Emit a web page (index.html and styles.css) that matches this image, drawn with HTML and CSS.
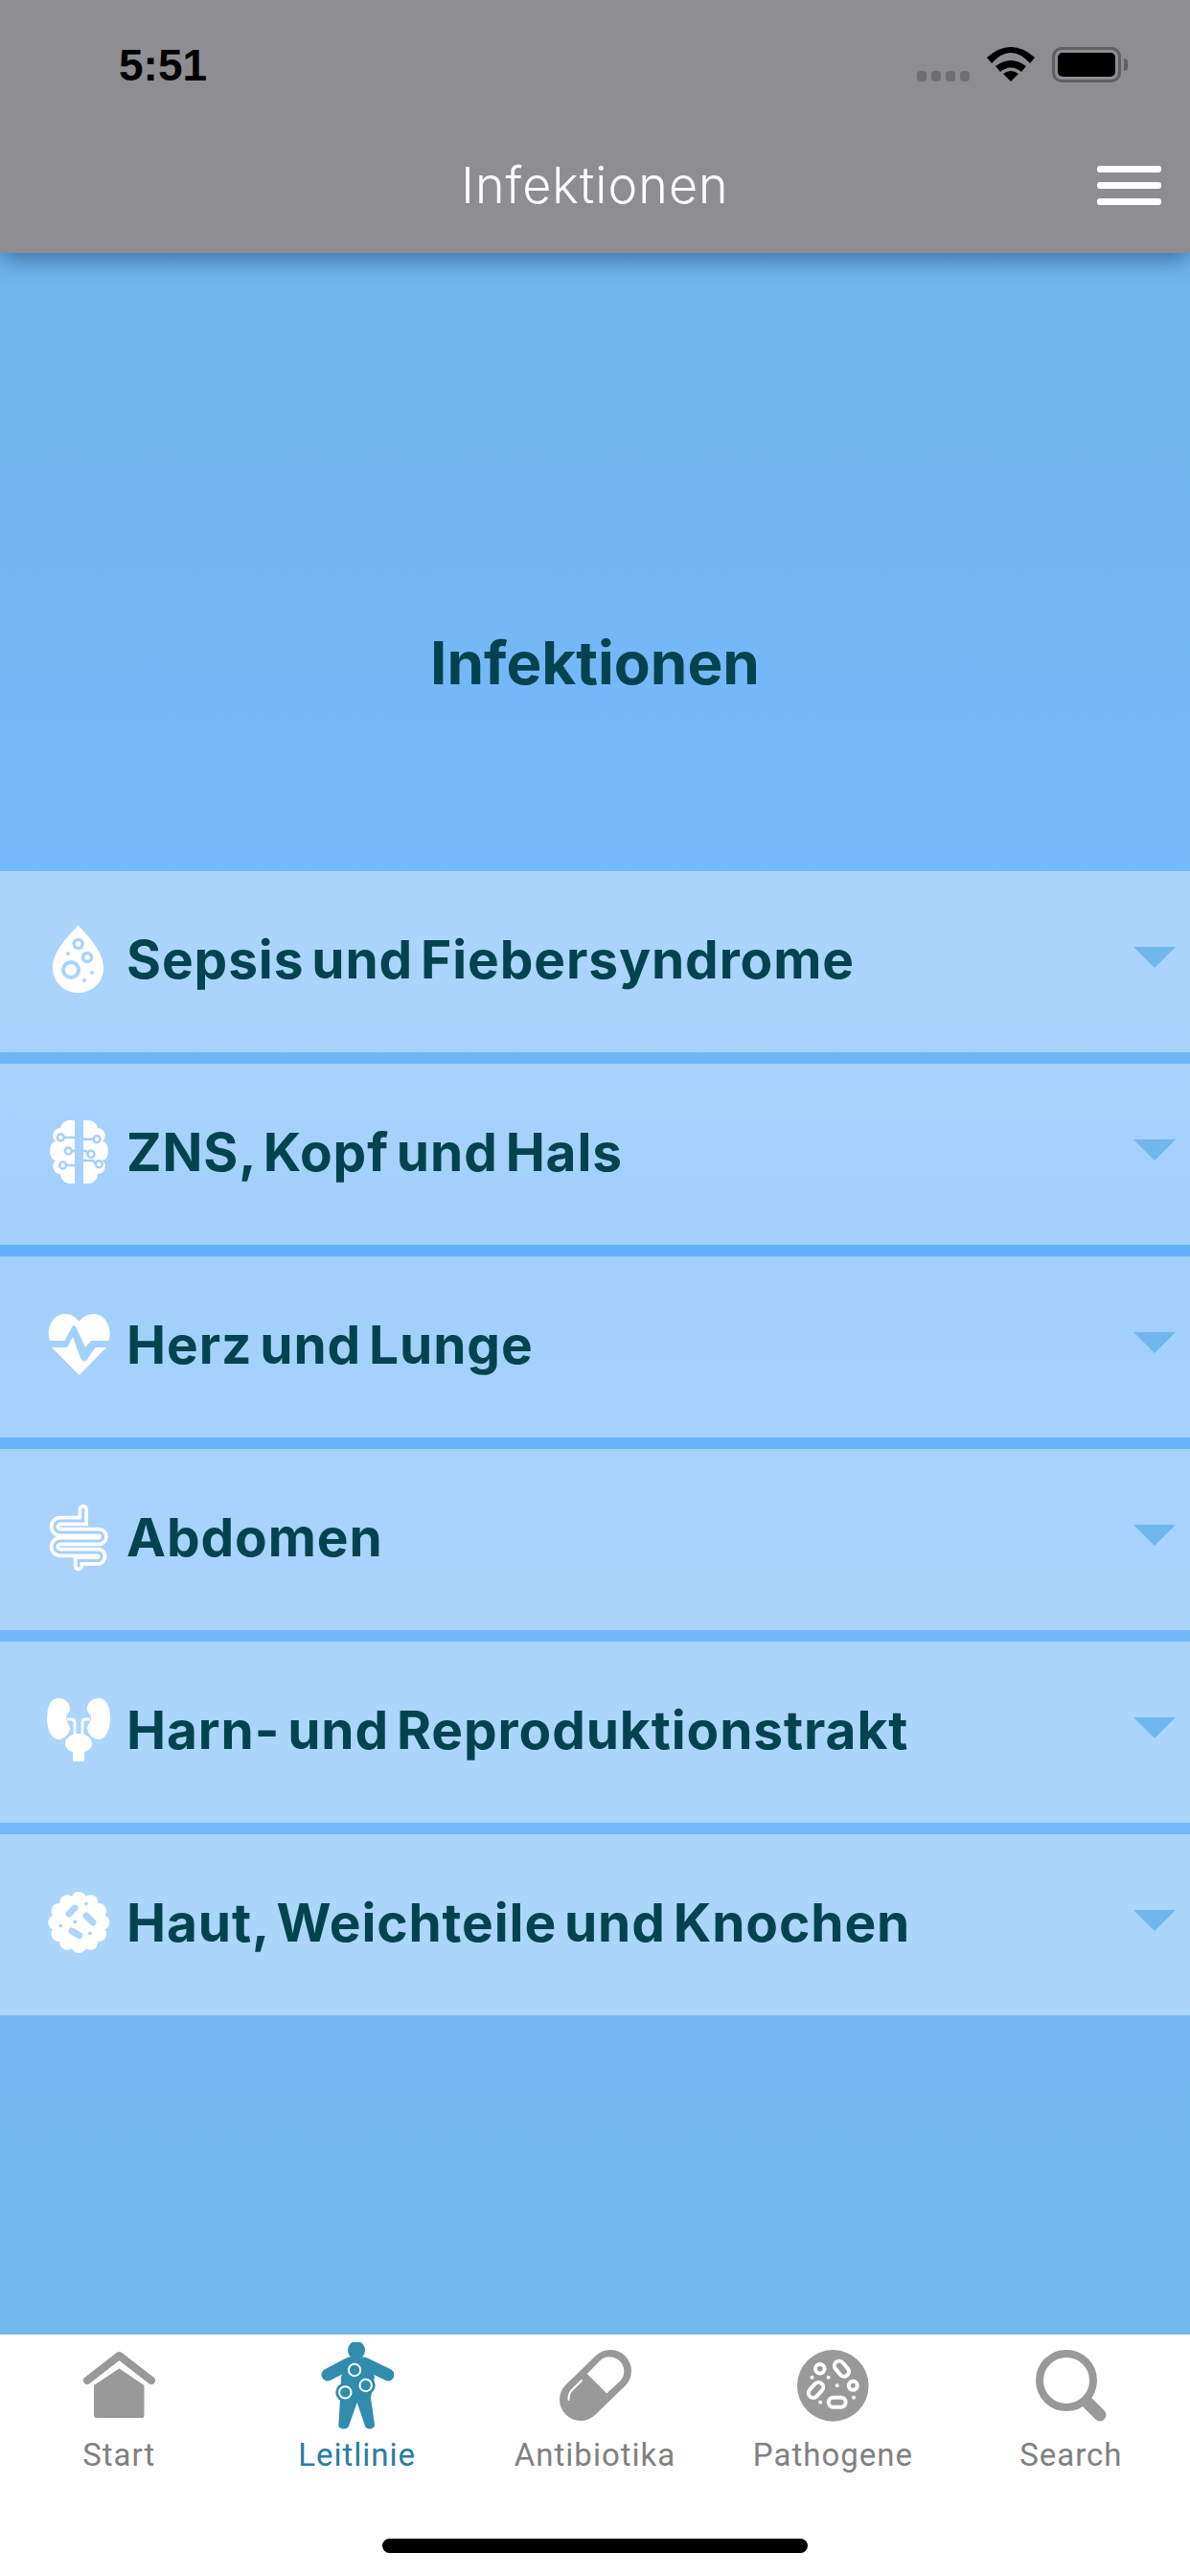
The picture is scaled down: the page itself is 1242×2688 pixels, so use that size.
FILE: index.html
```html
<!DOCTYPE html>
<html lang="de">
<head>
  <meta charset="UTF-8">
  <title>Infektionen</title>
  <link rel="stylesheet" href="styles.css">
</head>
<body>
  <div class="page-container">
    <header class="top-bar">
      <div class="status-bar">
        <span class="time">5:51</span>
        <div class="status-icons">
          <div class="signal"><i></i><i></i><i></i><i></i></div>
          <svg class="wifi" width="50" height="36" viewBox="0 0 50 36"><path d="M0 11 Q25 -11 50 11 L45 17 Q25 -5 5 17Z M9 20 Q25 8 41 20 L36 26 Q25 17 14 26Z M25 36 L17 28 Q25 22 33 28Z" fill="#000"/></svg>
          <div class="battery"><div class="battery-fill"></div></div>
        </div>
      </div>
      <div class="nav-bar">
        <span class="nav-title">Infektionen</span>
        <div class="menu-btn"><i></i><i></i><i></i></div>
      </div>
    </header>

    <main class="content">
      <h1 class="hero-title">Infektionen</h1>
      <div class="list">
        <div class="row">
          <svg class="row-icon" viewBox="0 0 66 72"><path fill="#fff" d="M32.500 0 C27 8 6 25 6 45 C6 61 19 71 32.500 71 C46 71 59 61 59 45 C59 25 38 8 32.500 0Z"/><g fill="none" stroke="#a9d3fd"><circle cx="32.700" cy="20" r="4.500" stroke-width="3.500"/><circle cx="42" cy="34" r="4.500" stroke-width="3.500"/><circle cx="25" cy="47" r="8" stroke-width="4"/></g><g fill="#a9d3fd"><circle cx="22" cy="30" r="2"/><circle cx="47" cy="50" r="2"/><circle cx="39" cy="58" r="2"/></g></svg>
          <span class="row-label">Sepsis und Fiebersyndrome</span>
          <span class="caret"></span>
        </div>
        <div class="row">
          <svg class="row-icon" viewBox="0 0 66 72"><g fill="#fff"><path d="M29 3 H23 A10 10 0 0 0 14 11 A8 8 0 0 0 9 25 A6 10 0 0 0 9 45 A8 8 0 0 0 14 59 A10 10 0 0 0 23 69 H29Z"/><path transform="matrix(-1 0 0 1 67 0)" d="M29 3 H23 A10 10 0 0 0 14 11 A8 8 0 0 0 9 25 A6 10 0 0 0 9 45 A8 8 0 0 0 14 59 A10 10 0 0 0 23 69 H29Z"/></g><g fill="none" stroke="#a5d0fb" stroke-width="2.500"><circle cx="14.300" cy="21" r="3.500"/><circle cx="22.300" cy="35" r="3.500"/><circle cx="16.700" cy="50" r="3.500"/><circle cx="52" cy="22.700" r="3.500"/><circle cx="46" cy="38.300" r="3.500"/><circle cx="54.300" cy="48.700" r="3.500"/><path d="M18 21 H29 M26 35 H29 M20 50 H29 M38 22.700 H48.500 M38 35 H41 L43 37 M38 45 H48 L51 48"/></g></svg>
          <span class="row-label">ZNS, Kopf und Hals</span>
          <span class="caret"></span>
        </div>
        <div class="row">
          <svg class="row-icon" viewBox="0 0 66 72"><path fill="#fff" d="M3 32 C-2 18 8 4 18 4 C25 4 30 7 33.700 12 C37 7 43 4 49 4 C60 4 69 18 64.500 32 H46 L40 39 L31 19 C29 15 27 15 25.500 19 L18.500 32Z"/><path fill="#fff" d="M5 39 H21 L27 28 L34.500 49 C36 54 41 55 43 50 L50.500 39 H62 L33.700 68Z"/></svg>
          <span class="row-label">Herz und Lunge</span>
          <span class="caret"></span>
        </div>
        <div class="row">
          <svg class="row-icon" viewBox="0 0 66 72"><g fill="none" stroke-linecap="round"><path stroke="#fff" stroke-width="10.500" d="M37.700 7 V19 H14 A6 6 0 0 0 14 31 H54 A4.500 4.500 0 0 1 54 40 H14 A6 6 0 0 0 14 52 H54 A4.500 4.500 0 0 1 54 60.500 H33 V66"/><path stroke="#a4d0fb" stroke-width="3" d="M37.700 7 V19 H14 A6 6 0 0 0 14 31 H54 A4.500 4.500 0 0 1 54 40 H14 A6 6 0 0 0 14 52 H54 A4.500 4.500 0 0 1 54 60.500 H33 V66"/></g></svg>
          <span class="row-label">Abdomen</span>
          <span class="caret"></span>
        </div>
        <div class="row">
          <svg class="row-icon" viewBox="0 0 66 72"><g fill="#fff"><path d="M12 3 C20 3 24 9 24 14 C24 18 20 20 20 24 C20 28 24 30 24 35 C23 41 18 46 12 46 C4 46 0 34 0 24 C0 12 4 3 12 3Z"/><path d="M54 3 C46 3 42 9 42 14 C42 18 46 20 46 24 C46 28 42 30 42 35 C43 41 48 46 54 46 C62 46 66 34 66 24 C66 12 62 3 54 3Z"/><path d="M33 40 C41 40 47 45 47 50 C47 55 43 58 39 59 V69 H27 V59 C23 58 19 55 19 50 C19 45 25 40 33 40Z"/></g><path fill="none" stroke="#fff" stroke-width="2.800" d="M21 25 H26 Q29 25 29 29 V42 M45 25 H40 Q37 25 37 29 V42"/></svg>
          <span class="row-label">Harn- und Reproduktionstrakt</span>
          <span class="caret"></span>
        </div>
        <div class="row">
          <svg class="row-icon" viewBox="0 0 66 72"><g fill="#fff" transform="translate(33.300 36)"><circle r="26"/><circle cx="24" r="8"/><circle cx="20.800" cy="12" r="8"/><circle cx="12" cy="20.800" r="8"/><circle cy="24" r="8"/><circle cx="-12" cy="20.800" r="8"/><circle cx="-20.800" cy="12" r="8"/><circle cx="-24" r="8"/><circle cx="-20.800" cy="-12" r="8"/><circle cx="-12" cy="-20.800" r="8"/><circle cy="-24" r="8"/><circle cx="12" cy="-20.800" r="8"/><circle cx="20.800" cy="-12" r="8"/></g><g stroke="#aed5fc" stroke-linecap="round"><path stroke-width="7" fill="none" d="M23 27 L29 21 M41 29 L48 36 M26 45 L33.700 49.500"/></g><g fill="#aed5fc"><circle cx="41" cy="16.500" r="2"/><circle cx="29.300" cy="35.500" r="2"/><circle cx="14.300" cy="39.500" r="2"/><circle cx="45" cy="47.200" r="2"/></g></svg>
          <span class="row-label">Haut, Weichteile und Knochen</span>
          <span class="caret"></span>
        </div>
      </div>
    </main>

    <nav class="tab-bar">
      <div class="tab">
        <svg class="tab-icon" viewBox="0 0 76 92"><path fill="none" stroke="#999" stroke-width="8" stroke-linecap="round" stroke-linejoin="round" d="M5 40 L38.400 14 L72 40"/><path fill="#999" d="M38.400 27.500 L12 45 V76 Q12 79 15 79 H62 Q64.500 79 64.500 76 V45Z"/></svg>
        <span>Start</span>
      </div>
      <div class="tab active">
        <svg class="tab-icon" viewBox="0 0 76 92"><g fill="#318cad"><ellipse cx="37" cy="8.500" rx="9" ry="9.500"/><path d="M28 17 H46 L56 36 L52 58 L56 86 C56 92 46 92 45.500 86 L37.700 63 L29.500 86 C29 92 18 92 18.300 86 L20 60 L21 36Z"/><circle cx="25.300" cy="52.400" r="10"/><circle cx="46.700" cy="45" r="10"/></g><path fill="none" stroke="#318cad" stroke-width="13" stroke-linecap="round" d="M7 34 L30 22 M70 34 L45 22"/><g fill="none" stroke="#fff" stroke-width="2"><circle cx="35" cy="29" r="6.200"/><circle cx="46.700" cy="45" r="6.200"/><circle cx="25.300" cy="52.400" r="6.200"/></g></svg>
        <span>Leitlinie</span>
      </div>
      <div class="tab">
        <svg class="tab-icon" viewBox="0 0 76 92"><path fill="none" stroke="#999" stroke-width="44" stroke-linecap="round" d="M23 60 L54 30"/><path fill="#fff" d="M29.700 33 L50.300 53.600 L64.300 40.600 A15 15 0 0 0 43.100 19.400Z"/><path fill="none" stroke="#fff" stroke-width="2" stroke-linecap="round" d="M24 40 L13 51 Q10 55 10.500 60"/></svg>
        <span>Antibiotika</span>
      </div>
      <div class="tab">
        <svg class="tab-icon" viewBox="0 0 76 92"><circle cx="38.300" cy="45.400" r="37.300" fill="#999"/><g fill="none" stroke="#fff" stroke-width="4"><circle cx="24.800" cy="27.700" r="4.800"/><rect x="-9" y="-5" width="18" height="10" rx="5" transform="translate(47.400 27.700) rotate(50)"/><rect x="-9" y="-5" width="18" height="10" rx="5" transform="translate(20.500 50) rotate(-48)"/><rect x="-9" y="-5" width="18" height="10" rx="5" transform="translate(42.700 62.700)"/><circle cx="59.300" cy="45.300" r="4.500"/></g><g fill="#fff"><circle cx="16.500" cy="36.700" r="2"/><circle cx="33.600" cy="36.700" r="2"/><circle cx="42.700" cy="45.300" r="2"/><circle cx="60" cy="57.700" r="2"/><circle cx="25.200" cy="62.700" r="2"/></g></svg>
        <span>Pathogene</span>
      </div>
      <div class="tab">
        <svg class="tab-icon" viewBox="0 0 76 92"><circle cx="33" cy="40" r="28" fill="none" stroke="#999" stroke-width="8"/><path stroke="#999" stroke-width="13" stroke-linecap="round" d="M55 63 L68 76"/></svg>
        <span>Search</span>
      </div>
    </nav>
    <div class="home-bar"></div>
  </div>
</body>
</html>
```

FILE: styles.css
```css
* {
  margin: 0;
  padding: 0;
  box-sizing: border-box;
}

html, body {
  width: 1242px;
  height: 2688px;
  overflow: hidden;
}

body {
  font-family: Inter, "Noto Sans", sans-serif;
}

.page-container {
  position: relative;
  width: 100%;
  height: 100%;
  display: flex;
  flex-direction: column;
  background: #fff;
}

/* top */
.top-bar {
  height: 264px;
  flex-shrink: 0;
  background: #8e8d92;
  box-shadow: 0 6px 24px rgba(0, 30, 70, 0.5);
  position: relative;
  z-index: 2;
}

.status-bar {
  height: 132px;
  padding: 46px 72px 0 124px;
  display: flex;
  justify-content: space-between;
}

.time {
  font-family: "Liberation Sans", sans-serif;
  font-weight: 700;
  font-size: 46px;
  line-height: 44px;
  color: #000;
}

.status-icons {
  display: flex;
  align-items: flex-start;
  padding-top: 3px;
}

.signal {
  display: flex;
  gap: 5px;
  margin: 25px 18px 0 0;
}

.signal i {
  width: 10px;
  height: 11px;
  border-radius: 4px;
  background: #6f6e72;
}

.wifi {
  margin-right: 18px;
}

.battery {
  position: relative;
  width: 72px;
  height: 37px;
  border: 3px solid #5f5e62;
  border-radius: 10px;
  padding: 3px;
}

.battery::after {
  content: "";
  position: absolute;
  right: -10px;
  top: 9px;
  width: 4px;
  height: 13px;
  background: #5f5e62;
  border-radius: 0 6px 6px 0;
}

.battery-fill {
  height: 100%;
  background: #000;
  border-radius: 5px;
}

.nav-bar {
  height: 132px;
  position: relative;
  display: flex;
  justify-content: center;
  padding-top: 32px;
}

.nav-title {
  font-size: 52px;
  font-weight: 300;
  line-height: 60px;
  letter-spacing: 1px;
  color: #fff;
}

.menu-btn {
  position: absolute;
  right: 30px;
  top: 41px;
  width: 67px;
  display: flex;
  flex-direction: column;
  gap: 10px;
}

.menu-btn i {
  height: 7px;
  border-radius: 3px;
  background: #fff;
}

/* content */
.content {
  flex: 1;
  min-height: 0;
  background: linear-gradient(180deg, #70b7ef 0%, #76b9fb 32%, #64b0f8 48%, #76b9fb 70%, #72b9f0 100%);
}

.hero-title {
  height: 645px;
  padding-top: 395px;
  text-align: center;
  font-size: 62px;
  line-height: 66px;
  font-weight: 700;
  color: #02434f;
}

.list {
  display: flex;
  flex-direction: column;
  gap: 12px;
}

.row {
  height: 189px;
  display: flex;
  align-items: center;
  padding: 0 15px 6px 49px;
  background: rgba(255, 255, 255, 0.4);
}

.row-icon {
  width: 66px;
  height: 72px;
  flex-shrink: 0;
  margin-right: 17px;
}

.row-label {
  flex: 1;
  font-size: 55px;
  font-weight: 700;
  letter-spacing: 0.9px;
  word-spacing: -6px;
  color: #02434f;
}

.caret {
  width: 0;
  height: 0;
  border-left: 22.500px solid transparent;
  border-right: 22.500px solid transparent;
  border-top: 22px solid #70b7ee;
  margin-bottom: 3px;
}

/* tabs */
.tab-bar {
  height: 188px;
  flex-shrink: 0;
  display: flex;
  background: #fff;
}

.tab {
  flex: 1;
  display: flex;
  flex-direction: column;
  align-items: center;
  padding-top: 8px;
  font-family: Roboto, sans-serif;
  font-size: 33px;
  line-height: 40px;
  letter-spacing: 1px;
  color: #808080;
}

.tab.active {
  color: #2a7d9f;
}

.tab-icon {
  width: 76px;
  height: 92px;
  margin-bottom: 6px;
}

.home-bar {
  height: 64px;
  flex-shrink: 0;
  position: relative;
  background: #fff;
}

.home-bar::after {
  content: "";
  position: absolute;
  left: 399px;
  top: 25px;
  width: 444px;
  height: 15px;
  border-radius: 8px;
  background: #000;
}
```
